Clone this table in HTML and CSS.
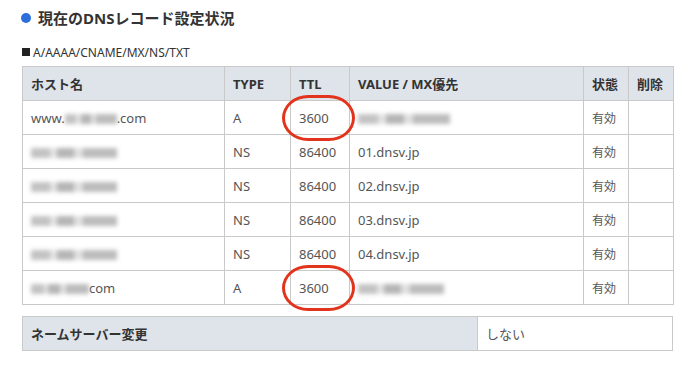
FILE: index.html
```html
<!DOCTYPE html>
<html lang="ja">
<head>
<meta charset="utf-8">
<link rel="stylesheet" href="styles.css">
</head>
<body>
<div class="page">
  <h2 class="title"><span class="dot"></span>現在のDNSレコード設定状況</h2>
  <p class="sub"><span class="sq"></span>A/AAAA/CNAME/MX/NS/TXT</p>
  <table class="dns">
    <colgroup>
      <col class="c1"><col class="c2"><col class="c3"><col class="c4"><col class="c5"><col class="c6">
    </colgroup>
    <thead>
      <tr><th>ホスト名</th><th>TYPE</th><th>TTL</th><th>VALUE / MX優先</th><th>状態</th><th>削除</th></tr>
    </thead>
    <tbody>
      <tr><td>www.<span class="blur w50"></span>.com</td><td>A</td><td class="ttl">3600<span class="ring"></span></td><td><span class="blur w90"></span></td><td class="st">有効</td><td></td></tr>
      <tr><td><span class="blur w85"></span></td><td>NS</td><td>86400</td><td>01.dnsv.jp</td><td class="st">有効</td><td></td></tr>
      <tr><td><span class="blur w85"></span></td><td>NS</td><td>86400</td><td>02.dnsv.jp</td><td class="st">有効</td><td></td></tr>
      <tr><td><span class="blur w85"></span></td><td>NS</td><td>86400</td><td>03.dnsv.jp</td><td class="st">有効</td><td></td></tr>
      <tr><td><span class="blur w85"></span></td><td>NS</td><td>86400</td><td>04.dnsv.jp</td><td class="st">有効</td><td></td></tr>
      <tr><td><span class="blur w55"></span>com</td><td>A</td><td class="ttl">3600<span class="ring"></span></td><td><span class="blur w85"></span></td><td class="st">有効</td><td></td></tr>
    </tbody>
  </table>
  <table class="ns">
    <tr><th>ネームサーバー変更</th><td>しない</td></tr>
  </table>
</div>
</body>
</html>
```
FILE: styles.css
```css
* { box-sizing: border-box; }
html, body { margin: 0; padding: 0; background: #fff; }
body {
  font-family: "Noto Sans", "Noto Sans CJK JP", sans-serif;
  color: #555;
}
.page { padding: 7px 22px 0 22px; }
.title {
  margin: 0 0 0 -1px;
  display: flex;
  align-items: center;
  font-size: 15px;
  font-weight: bold;
  color: #333;
  height: 21px;
}
.dot {
  width: 10px; height: 10px; border-radius: 50%;
  background: #2c6fdc;
  margin-right: 7px;
}
.sub {
  margin: 17px 0 0 0;
  font-size: 12px;
  color: #333;
  display: flex;
  align-items: center;
  height: 14px;
}
.sq { width: 8px; height: 8px; background: #222; margin-right: 3px; }
table { border-collapse: collapse; width: 651px; table-layout: fixed; }
.dns { margin-top: 7px; }
.c1 { width: 202px; } .c2 { width: 66px; } .c3 { width: 59px; }
.c4 { width: 234px; } .c5 { width: 45px; } .c6 { width: 45px; }
th, td {
  border: 1px solid #c9c9c9;
  height: 34px;
  padding: 0 8px;
  text-align: left;
  font-size: 13px;
  white-space: nowrap;
}
th { background: #dfe3ea; color: #333; font-weight: bold; }
td { color: #555; }
td.st { font-size: 12px; }
.ttl { position: relative; }
.ring {
  position: absolute;
  left: -9px; top: -6px;
  width: 73px; height: 46px;
  border: 3px solid #e2331c;
  border-radius: 26px / 23px;
}
.blur {
  display: inline-block;
  height: 10px;
  vertical-align: middle;
  background: linear-gradient(90deg, #b8b8b8 0 22%, #dedede 22% 30%, #a8a8a8 30% 50%, #dadada 50% 60%, #b0b0b0 60% 100%);
  filter: blur(2px);
  opacity: 0.85;
}
.w50 { width: 52px; } .w55 { width: 58px; } .w85 { width: 86px; } .w90 { width: 92px; }
.ns { margin-top: 11px; }
.ns th { width: 455px; }
.ns td { background: #fff; }
```
